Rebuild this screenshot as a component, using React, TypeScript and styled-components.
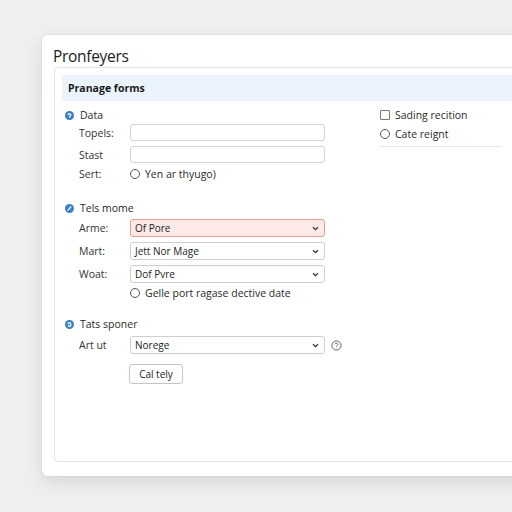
import React from 'react'
import styled, { createGlobalStyle } from 'styled-components'

const GlobalStyle = createGlobalStyle`
    html, body {
        margin: 0;
        padding: 0;
        background: #efefef;
        font-family: "Open Sans", "Noto Sans", sans-serif;
        color: #2a2a2a;
        overflow: hidden;
    }
`

const Page = styled.div`
    width: 512px;
    height: 512px;
    padding: 35px 0 0 42px;
    box-sizing: border-box;
`

const Window = styled.div`
    width: 490px;
    height: 441px;
    background: #fff;
    border-radius: 6px 0 0 6px;
    box-shadow: 0 6px 18px rgba(0, 0, 0, 0.1), 0 0 0 1px rgba(0, 0, 0, 0.03);
    padding: 10px 0 0 12px;
    box-sizing: border-box;
    display: flex;
    flex-direction: column;
`

const Title = styled.h1`
    margin: 0 0 0 -1px;
    font-size: 15.5px;
    font-weight: 400;
    line-height: 22px;
    color: #222;
    letter-spacing: -0.3px;
`

const Panel = styled.div`
    height: 395px;
    border: 1px solid #e3e3e3;
    border-right: none;
    border-radius: 4px 0 0 4px;
    padding: 7px 0 0 7px;
    box-sizing: border-box;
`

const PanelHeader = styled.div`
    height: 26px;
    background: #ebf4fc;
    display: flex;
    align-items: center;
    padding-left: 6px;
    font-size: 10.5px;
    font-weight: 700;
    color: #1a1a1a;
`

const PanelBody = styled.div`
    display: flex;
    padding-top: 7px;
`

const LeftColumn = styled.div`
    width: 318px;
    display: flex;
    flex-direction: column;
`

const RightColumn = styled.div`
    width: 122px;
    display: flex;
    flex-direction: column;
    gap: 5px;
`

const Section = styled.div<{ $gap?: number }>`
    display: flex;
    flex-direction: column;
    margin-bottom: ${p => p.$gap ?? 0}px;
`

const SectionHead = styled.div<{ $mb: number }>`
    display: flex;
    align-items: center;
    gap: 6px;
    height: 14px;
    padding-left: 3px;
    font-size: 10.5px;
    color: #2a2a2a;
    margin-bottom: ${p => p.$mb}px;
`

const Rows = styled.div`
    display: grid;
    grid-template-columns: 51px 195px;
    row-gap: 5px;
    padding-left: 17px;
    align-items: center;
`

const Label = styled.span`
    font-size: 10.5px;
    color: #333;
    line-height: 12px;
`

const TextInput = styled.div`
    height: 17px;
    border: 1px solid #d2d2d2;
    border-radius: 3px;
    box-sizing: border-box;
    background: #fff;
`

const Select = styled.div<{ $error?: boolean }>`
    height: 18px;
    border: 1px solid ${p => (p.$error ? '#e59a96' : '#cfcfcf')};
    background: ${p => (p.$error ? '#fde9e7' : '#fff')};
    border-radius: 3px;
    box-sizing: border-box;
    display: flex;
    align-items: center;
    justify-content: space-between;
    padding: 0 5px 0 4px;
    font-size: 10px;
    color: #222;
`

const Choice = styled.label<{ $h?: number }>`
    display: flex;
    align-items: center;
    gap: 5px;
    font-size: 10.5px;
    color: #2a2a2a;
    height: ${p => p.$h ?? 14}px;
    white-space: nowrap;
`

const Radio = styled.span`
    width: 8px;
    height: 8px;
    border-radius: 50%;
    border: 1px solid #555;
    background: #fff;
    flex-shrink: 0;
`

const Box = styled.span`
    width: 8px;
    height: 8px;
    border: 1px solid #777;
    border-radius: 1px;
    flex-shrink: 0;
`

const Divider = styled.div`
    height: 1px;
    background: #e8e8e8;
`

const FieldWithHelp = styled.div`
    display: flex;
    align-items: center;
    gap: 6px;
    width: 212px;
`

const Button = styled.button`
    width: 54px;
    height: 20px;
    margin: 10px 0 0 67px;
    border: 1px solid #c4c4c4;
    border-radius: 3px;
    background: #fff;
    font-family: inherit;
    font-size: 10px;
    color: #222;
    padding: 0;
`

const Chevron = () => (
    <svg width="7" height="5" viewBox="0 0 7 5">
        <path d="M1 1.2 L3.5 3.6 L6 1.2" fill="none" stroke="#333" strokeWidth="1.3" />
    </svg>
)

const SectionIcon = ({ glyph }: { glyph: string }) => (
    <svg width="9" height="9" viewBox="0 0 9 9">
        <circle cx="4.5" cy="4.5" r="4.5" fill="#3b7fc4" />
        <path d={glyph} fill="none" stroke="#fff" strokeWidth="1.2" strokeLinecap="round" />
    </svg>
)

const HelpIcon = () => (
    <svg width="11" height="11" viewBox="0 0 11 11">
        <circle cx="5.5" cy="5.5" r="4.6" fill="none" stroke="#555" strokeWidth="0.9" />
        <path d="M4 4.2 C4 2.8 7 2.8 7 4.3 C7 5.3 5.5 5.4 5.5 6.6 M5.5 8 L5.5 8.3" fill="none" stroke="#555" strokeWidth="0.9" />
    </svg>
)

export default function App() {
    return (
        <>
            <GlobalStyle />
            <Page>
                <Window>
                    <Title>Pronfeyers</Title>
                    <Panel>
                        <PanelHeader>Pranage forms</PanelHeader>
                        <PanelBody>
                            <LeftColumn>
                                <Section $gap={21}>
                                    <SectionHead $mb={2}>
                                        <SectionIcon glyph="M3 3.5 C3.5 2.4 5.8 2.6 5.8 4 C5.8 5 4.5 5.3 4.5 6.3" />
                                        Data
                                    </SectionHead>
                                    <Rows>
                                        <Label>Topels:</Label>
                                        <TextInput />
                                        <Label>Stast</Label>
                                        <TextInput />
                                        <Label>Sert:</Label>
                                        <Choice $h={10}>
                                            <Radio />
                                            Yen ar thyugo)
                                        </Choice>
                                    </Rows>
                                </Section>
                                <Section $gap={19}>
                                    <SectionHead $mb={4}>
                                        <SectionIcon glyph="M5.8 3 L3.2 6" />
                                        Tels mome
                                    </SectionHead>
                                    <Rows>
                                        <Label>Arme:</Label>
                                        <Select $error>
                                            Of Pore
                                            <Chevron />
                                        </Select>
                                        <Label>Mart:</Label>
                                        <Select>
                                            Jett Nor Mage
                                            <Chevron />
                                        </Select>
                                        <Label>Woat:</Label>
                                        <Select>
                                            Dof Pvre
                                            <Chevron />
                                        </Select>
                                        <span />
                                        <Choice $h={10}>
                                            <Radio />
                                            Gelle port ragase dective date
                                        </Choice>
                                    </Rows>
                                </Section>
                                <Section>
                                    <SectionHead $mb={5}>
                                        <SectionIcon glyph="M3.2 3.6 C3.5 2.4 5.8 2.4 5.8 3.8 L5.8 5.4 C5.8 6.6 3.6 6.6 3.4 5.6" />
                                        Tats sponer
                                    </SectionHead>
                                    <Rows>
                                        <Label>Art ut</Label>
                                        <FieldWithHelp>
                                            <Select style={{ flex: 1 }}>
                                                Norege
                                                <Chevron />
                                            </Select>
                                            <HelpIcon />
                                        </FieldWithHelp>
                                    </Rows>
                                    <Button>Cal tely</Button>
                                </Section>
                            </LeftColumn>
                            <RightColumn>
                                <Choice>
                                    <Box />
                                    Sading recition
                                </Choice>
                                <Choice>
                                    <Radio />
                                    Cate reignt
                                </Choice>
                                <Divider />
                            </RightColumn>
                        </PanelBody>
                    </Panel>
                </Window>
            </Page>
        </>
    )
}
